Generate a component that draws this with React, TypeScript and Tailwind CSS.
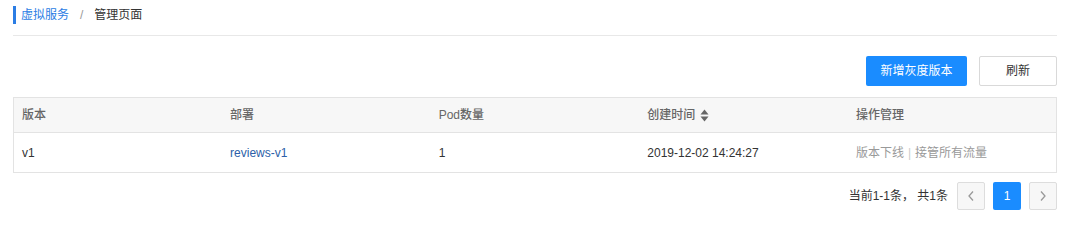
import React from "react";

const rows = [
  { version: "v1", deploy: "reviews-v1", pods: "1", created: "2019-12-02 14:24:27" },
];

const font = "font-['Liberation_Sans','Noto_Sans_CJK_SC',sans-serif]";

export default function App() {
  return (
    <div className={`w-[1070px] h-[223px] bg-white px-[13px] text-[12px] text-[#333] ${font}`}>
      <div className="pt-[6px] h-[36px] border-b border-[#e8e8e8] flex items-start">
        <div className="flex items-center h-[18px] border-l-[3px] border-[#2b7de4] pl-[5px]">
          <span className="text-[#2b7de4]">虚拟服务</span>
          <span className="mx-[11px] text-[#999]">/</span>
          <span className="text-[#333]">管理页面</span>
        </div>
      </div>

      <div className="flex justify-end gap-[12px] mt-[20px]">
        <button className="w-[101px] h-[30px] rounded-[2px] bg-[#1a8cff] text-white">新增灰度版本</button>
        <button className="w-[78px] h-[30px] rounded-[2px] border border-[#d9d9d9] bg-white text-[#333]">刷新</button>
      </div>

      <table className="w-full mt-[11px] border border-[#e3e3e3] border-collapse table-fixed">
        <thead>
          <tr className="h-[35px] bg-[#f7f7f7] text-[#666] text-left">
            <th className="font-medium pl-[8px]">版本</th>
            <th className="font-medium pl-[8px]">部署</th>
            <th className="font-medium pl-[8px]">Pod数量</th>
            <th className="font-medium pl-[8px]">
              <span className="inline-flex items-center gap-[5px]">
                创建时间
                <svg width="9" height="13" viewBox="0 0 9 13">
                  <path d="M4.5 0.5 L8.5 5.5 H0.5 Z" fill="#666" />
                  <path d="M4.5 12.5 L8.5 7.5 H0.5 Z" fill="#666" />
                </svg>
              </span>
            </th>
            <th className="font-medium pl-[8px]">操作管理</th>
          </tr>
        </thead>
        <tbody>
          {rows.map((r) => (
            <tr key={r.version} className="h-[40px] border-t border-[#e3e3e3]">
              <td className="pl-[8px]">{r.version}</td>
              <td className="pl-[8px] text-[#2d5fa8]">{r.deploy}</td>
              <td className="pl-[8px]">{r.pods}</td>
              <td className="pl-[8px]">{r.created}</td>
              <td className="pl-[8px] text-[#999]">
                版本下线<span className="mx-[4px] text-[#ccc]">|</span>接管所有流量
              </td>
            </tr>
          ))}
        </tbody>
      </table>

      <div className="flex justify-end items-center mt-[9px]">
        <span className="text-[#333] mr-[9px]">当前1-1条，&nbsp;共1条</span>
        <button className="w-[28px] h-[28px] rounded-[2px] border border-[#ddd] bg-[#f7f7f7] flex items-center justify-center">
          <svg width="8" height="12" viewBox="0 0 8 12">
            <path d="M6 1.5 L2 6 L6 10.5" stroke="#999" strokeWidth="1.3" fill="none" />
          </svg>
        </button>
        <button className="ml-[8px] w-[28px] h-[28px] rounded-[2px] bg-[#1a8cff] text-white">1</button>
        <button className="ml-[8px] w-[28px] h-[28px] rounded-[2px] border border-[#ddd] bg-[#f7f7f7] flex items-center justify-center">
          <svg width="8" height="12" viewBox="0 0 8 12">
            <path d="M2 1.5 L6 6 L2 10.5" stroke="#999" strokeWidth="1.3" fill="none" />
          </svg>
        </button>
      </div>
    </div>
  );
}
